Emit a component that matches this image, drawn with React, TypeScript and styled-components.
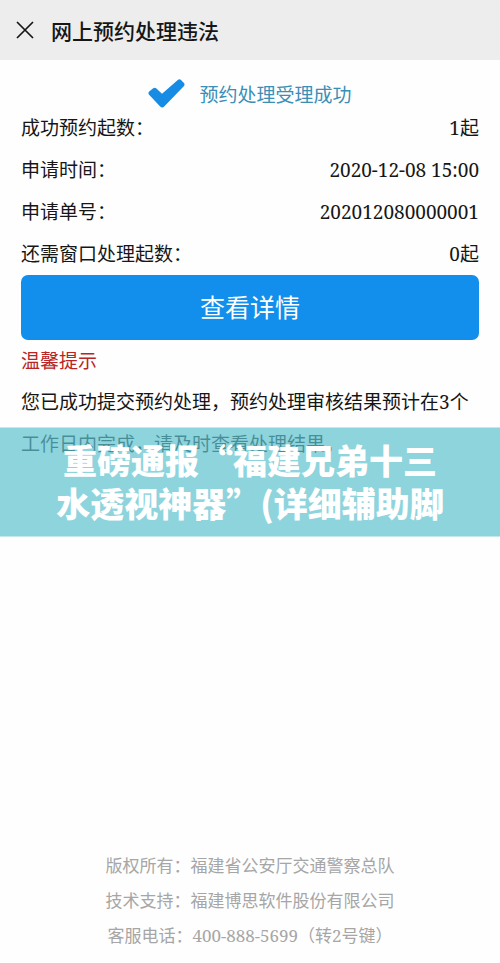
import React from "react";
import styled, { createGlobalStyle } from "styled-components";

const GlobalStyle = createGlobalStyle`
  * { box-sizing: border-box; }
  body {
    margin: 0;
    background: #fefefe;
    color: #161616;
    font-family: "Noto Sans CJK SC", sans-serif;
  }
`;

const Page = styled.div`
  position: relative;
  display: flex;
  flex-direction: column;
  min-height: 100vh;
`;

const Header = styled.header`
  display: flex;
  align-items: center;
  gap: 17px;
  height: 60px;
  padding: 0 16px;
  background: #ededed;
`;

const CloseButton = styled.button`
  display: flex;
  padding: 0;
  border: 0;
  background: none;
  color: #161616;
`;

const Title = styled.h1`
  margin: 0;
  font-size: 21px;
  font-weight: 500;
  line-height: 32px;
`;

const Content = styled.main`
  padding: 20px 21px 0;
`;

const Status = styled.div`
  display: flex;
  align-items: center;
  justify-content: center;
  gap: 14px;
  height: 26px;
  color: #3a8fb7;
  font-size: 19px;
`;

const Details = styled.dl`
  margin: 0 0 1px;
  font-size: 19px;
  line-height: 42px;
`;

const Row = styled.div`
  display: flex;
  justify-content: space-between;
  height: 42px;
`;

const Value = styled.dd`
  margin: 0;
`;

const Digits = styled.span`
  font-family: "Noto Serif", "Liberation Serif", serif;
  line-height: 1;
`;

const DetailButton = styled.button`
  display: block;
  width: 100%;
  height: 65px;
  padding: 0 0 4px;
  border: 0;
  border-radius: 7px;
  background: #128fec;
  color: #fff;
  font-family: inherit;
  font-size: 25px;
`;

const TipHeading = styled.h2`
  margin: 0;
  color: #b82525;
  font-size: 19px;
  font-weight: 400;
  line-height: 40px;
`;

const TipText = styled.p`
  margin: 0;
  font-size: 19px;
  line-height: 42px;
`;

const Line = styled.span`
  display: block;
  white-space: nowrap;
`;

const Banner = styled.div`
  position: absolute;
  top: 50%;
  right: 0;
  left: 0;
  transform: translateY(-50%);
  padding: 10px 16px 13px;
  background: rgba(94, 194, 206, 0.7);
  color: #fff;
  font-size: 34px;
  font-weight: 900;
  line-height: 43px;
  text-align: center;
`;

const Footer = styled.footer`
  margin-top: auto;
  padding-bottom: 11px;
  color: #a6a6a6;
  font-size: 17px;
  line-height: 35px;
  text-align: center;
`;

const details = [
  { label: "成功预约起数：", digits: "1", unit: "起" },
  { label: "申请时间：", digits: "2020-12-08 15:00", unit: "" },
  { label: "申请单号：", digits: "202012080000001", unit: "" },
  { label: "还需窗口处理起数：", digits: "0", unit: "起" },
];

export default function App() {
  return (
    <Page>
      <GlobalStyle />
      <Header>
        <CloseButton type="button" aria-label="关闭">
          <svg width="18" height="18" viewBox="0 0 18 18" fill="none" stroke="currentColor" strokeWidth="1.7">
            <path d="M1 1 17 17M17 1 1 17" />
          </svg>
        </CloseButton>
        <Title>网上预约处理违法</Title>
      </Header>
      <Content>
        <Status role="status">
          <svg width="37" height="29" viewBox="0 0 37 29" aria-hidden="true">
            <path
              d="M1.2 12.6 5.2 9.2Q6.8 8 8.4 9.4L14 14.8 29.8.9Q31.5-.3 33 1L36 4Q37.2 5.6 35.8 7.2L16.2 27.5Q14.2 29.3 12.2 27.4L1.1 15.7Q-.3 14.1 1.2 12.6Z"
              fill="#168ce4"
            />
          </svg>
          <span>预约处理受理成功</span>
        </Status>
        <Details>
          {details.map((item) => (
            <Row key={item.label}>
              <dt>{item.label}</dt>
              <Value>
                <Digits>{item.digits}</Digits>
                {item.unit}
              </Value>
            </Row>
          ))}
        </Details>
        <DetailButton type="button">查看详情</DetailButton>
        <TipHeading>温馨提示</TipHeading>
        <TipText>
          <Line>
            您已成功提交预约处理，预约处理审核结果预计在<Digits>3</Digits>个
          </Line>
          <Line>工作日内完成，请及时查看处理结果。</Line>
        </TipText>
      </Content>
      <Footer>
        <div>版权所有：福建省公安厅交通警察总队</div>
        <div>技术支持：福建博思软件股份有限公司</div>
        <div>
          客服电话：<Digits>400-888-5699</Digits>（转<Digits>2</Digits>号键）
        </div>
      </Footer>
      <Banner>
        <Line>重磅通报“福建兄弟十三</Line>
        <Line>水透视神器”(详细辅助脚</Line>
      </Banner>
    </Page>
  );
}
